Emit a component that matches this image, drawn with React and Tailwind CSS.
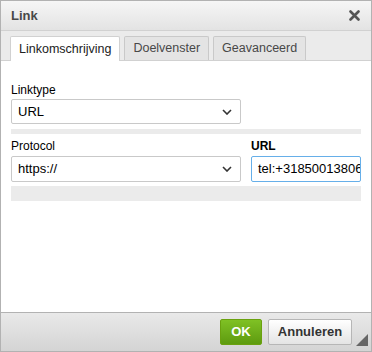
import React from "react";

const Chevron = () => (
  <svg width="10" height="6" viewBox="0 0 10 6" className="absolute right-[8px] top-1/2 -translate-y-1/2">
    <path d="M1 1 L5 5 L9 1" fill="none" stroke="#333" strokeWidth="1.6" />
  </svg>
);

export default function App() {
  return (
    <div className="w-[372px] h-[352px] border border-[#b2b2b2] flex flex-col bg-white font-['Liberation_Sans',Arial,sans-serif] text-[#222]">
      <div className="h-[30px] shrink-0 flex items-center justify-between px-[10px] bg-gradient-to-b from-[#f6f6f6] to-[#e3e3e3] border-b border-[#d1d1d1]">
        <span className="text-[13px] font-bold text-[#484848]">Link</span>
        <svg width="11" height="11" viewBox="0 0 11 11" className="mr-[1px]">
          <path d="M1.5 1.5 L9.5 9.5 M9.5 1.5 L1.5 9.5" stroke="#555" strokeWidth="2.6" strokeLinecap="round" />
        </svg>
      </div>
      <div className="h-[30px] shrink-0 bg-[#ebebeb] border-b border-[#d1d1d1] flex items-end px-[9px] gap-[4px]">
        <div className="h-[25px] -mb-px px-[8px] flex items-center bg-white border border-b-0 border-[#d1d1d1] rounded-t-[2px] text-[12.5px] text-[#222]">Linkomschrijving</div>
        <div className="h-[24px] px-[8px] flex items-center bg-[#e4e4e4] border border-b-0 border-[#c9c9c9] rounded-t-[2px] text-[12.5px] text-[#484848]">Doelvenster</div>
        <div className="h-[24px] px-[8px] flex items-center bg-[#e4e4e4] border border-b-0 border-[#c9c9c9] rounded-t-[2px] text-[12.5px] text-[#484848]">Geavanceerd</div>
      </div>
      <div className="flex-1 px-[10px] pt-[22px]">
        <div className="text-[12px] leading-[14px] text-[#000]">Linktype</div>
        <div className="relative mt-[2px] w-[230px] h-[25px] border border-[#c9c9c9] rounded-[2px] flex items-center pl-[6px] text-[13px] text-[#000]">
          URL
          <Chevron />
        </div>
        <div className="mt-[5px] h-[5px] bg-[#ebebeb]"></div>
        <div className="flex gap-[10px] mt-[5px]">
          <div className="w-[230px] shrink-0">
            <div className="text-[12px] leading-[14px] text-[#000]">Protocol</div>
            <div className="relative mt-[3px] h-[26px] border border-[#c9c9c9] rounded-[2px] flex items-center pl-[6px] text-[13px] text-[#000]">
              https://
              <Chevron />
            </div>
          </div>
          <div className="flex-1 min-w-0">
            <div className="text-[12px] leading-[14px] font-bold text-[#000]">URL</div>
            <div className="mt-[3px] h-[26px] border border-[#66afe9] rounded-[2px] flex items-center pl-[6px] text-[13px] text-[#000] overflow-hidden whitespace-nowrap">
              tel:+318500138060
            </div>
          </div>
        </div>
        <div className="mt-[4px] h-[15px] bg-[#ebebeb]"></div>
      </div>
      <div className="h-[39px] shrink-0 border-t border-[#b2b2b2] bg-gradient-to-b from-[#e9e9e9] to-[#d4d4d4] flex items-center justify-end pr-[19px] gap-[6px] relative">
        <button className="h-[26px] w-[42px] rounded-[2px] border border-[#6aa10f] bg-gradient-to-b from-[#7fc124] to-[#5e9b0f] text-white text-[13px] font-bold">OK</button>
        <button className="h-[26px] w-[84px] rounded-[2px] border border-[#b6b6b6] bg-gradient-to-b from-[#ffffff] to-[#e4e4e4] text-[#333] text-[13px] font-bold">Annuleren</button>
        <svg width="12" height="12" viewBox="0 0 12 12" className="absolute right-[3px] bottom-[5px]">
          <path d="M12 0 L12 12 L0 12 Z" fill="#666" />
        </svg>
      </div>
    </div>
  );
}
